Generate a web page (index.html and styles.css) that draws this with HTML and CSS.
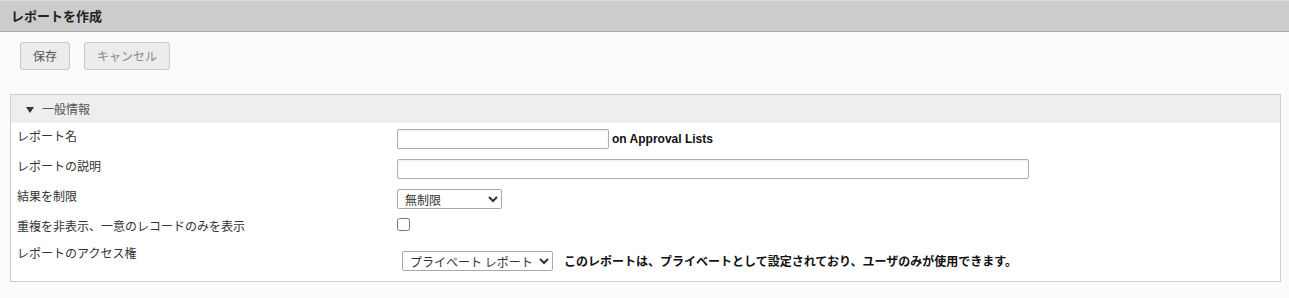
FILE: index.html
```html
<!DOCTYPE html>
<html lang="ja">
<head>
<meta charset="utf-8">
<title>レポートを作成</title>
<link rel="stylesheet" href="styles.css">
</head>
<body>
<header class="titlebar"><h1 class="title">レポートを作成</h1></header>
<div class="toolbar">
  <button class="btn btn-save" type="button">保存</button>
  <button class="btn btn-cancel" type="button">キャンセル</button>
</div>
<section class="panel">
  <div class="panel-head">
    <svg class="caret" width="8" height="6" viewBox="0 0 8 6"><polygon points="0,0 8,0 4,6" fill="#333"/></svg>
    <span class="panel-title">一般情報</span>
  </div>
  <div class="form">
    <div class="row">
      <label class="lbl">レポート名</label>
      <div class="ctl"><input class="txt txt-name" type="text"><span class="suffix">on Approval Lists</span></div>
    </div>
    <div class="row">
      <label class="lbl">レポートの説明</label>
      <div class="ctl"><input class="txt txt-desc" type="text"></div>
    </div>
    <div class="row">
      <label class="lbl">結果を制限</label>
      <div class="ctl"><select class="sel sel-limit"><option>無制限</option></select></div>
    </div>
    <div class="row">
      <label class="lbl">重複を非表示、一意のレコードのみを表示</label>
      <div class="ctl ctl-check"><input class="chk" type="checkbox"></div>
    </div>
    <div class="row row-access">
      <label class="lbl">レポートのアクセス権</label>
      <div class="ctl"><select class="sel sel-access"><option>プライベート レポート</option></select><span class="note">このレポートは、プライベートとして設定されており、ユーザのみが使用できます。</span></div>
    </div>
  </div>
</section>
</body>
</html>
```

FILE: styles.css
```css
html, body {
  margin: 0;
  padding: 0;
}
body {
  background: #fbfbfb;
  font-family: "Noto Sans CJK JP", "Liberation Sans", sans-serif;
  font-size: 12px;
  color: #333;
  width: 1289px;
  height: 298px;
  overflow: hidden;
}
.titlebar {
  height: 30px;
  background: #cccccc;
  border-top: 1px solid #d9d9d9;
  border-bottom: 1px solid #a9a9a9;
  display: flex;
  align-items: center;
  padding-left: 11px;
}
.title {
  margin: 0;
  font-size: 13px;
  font-weight: bold;
  color: #222;
  line-height: 16px;
}
.toolbar {
  display: flex;
  gap: 14px;
  padding: 10px 0 0 20px;
}
.btn {
  height: 28px;
  box-sizing: border-box;
  border: 1px solid #c8c8c8;
  border-radius: 3px;
  background: #ececec;
  font-family: "Noto Sans CJK JP", sans-serif;
  font-size: 12px;
  padding: 0;
  line-height: 16px;
}
.btn-save {
  width: 50px;
  color: #555;
}
.btn-cancel {
  width: 86px;
  color: #888;
}
.panel {
  margin: 24px 8px 0 10px;
  border: 1px solid #cfcfcf;
  background: #fff;
}
.panel-head {
  height: 28px;
  background: #eeeeee;
  display: flex;
  align-items: center;
  padding-left: 15px;
  color: #555;
}
.caret {
  margin-right: 8px;
  margin-top: 1px;
}
.panel-title {
  line-height: 16px;
}
.row {
  display: grid;
  grid-template-columns: 386px 1fr;
  height: 30px;
}
.lbl {
  padding: 5px 0 0 6px;
  line-height: 16px;
  color: #333;
}
.ctl {
  padding-top: 6px;
  display: flex;
  align-items: center;
  align-self: start;
}
.ctl-check {
  padding-top: 5px;
}
.txt {
  box-sizing: border-box;
  height: 20px;
  border: 1px solid #adadad;
  border-radius: 2px;
  box-shadow: inset 0 1px 2px rgba(0, 0, 0, 0.08);
  margin: 0;
  padding: 0 3px;
  font-size: 12px;
}
.txt-name {
  width: 212px;
}
.txt-desc {
  width: 632px;
}
.suffix {
  margin-left: 3px;
  font-family: "Liberation Sans", Arial, sans-serif;
  font-weight: bold;
  font-size: 12px;
  color: #111;
}
.sel {
  box-sizing: border-box;
  height: 20px;
  margin: 0;
  border: 1px solid #a9a9a9;
  border-radius: 2px;
  background: #fff;
  font-family: "Noto Sans CJK JP", sans-serif;
  font-size: 12px;
  color: #333;
  padding: 0 0 0 3px;
}
.sel-limit {
  width: 105px;
}
.sel-access {
  width: 151px;
}
.chk {
  margin: 0;
  width: 13px;
  height: 13px;
}
.row-access {
  height: 38px;
}
.row-access .lbl {
  padding-top: 2px;
}
.row-access .ctl {
  padding: 8px 0 0 5px;
}
.note {
  margin-left: 11px;
  font-weight: bold;
  color: #111;
  line-height: 16px;
}
```
